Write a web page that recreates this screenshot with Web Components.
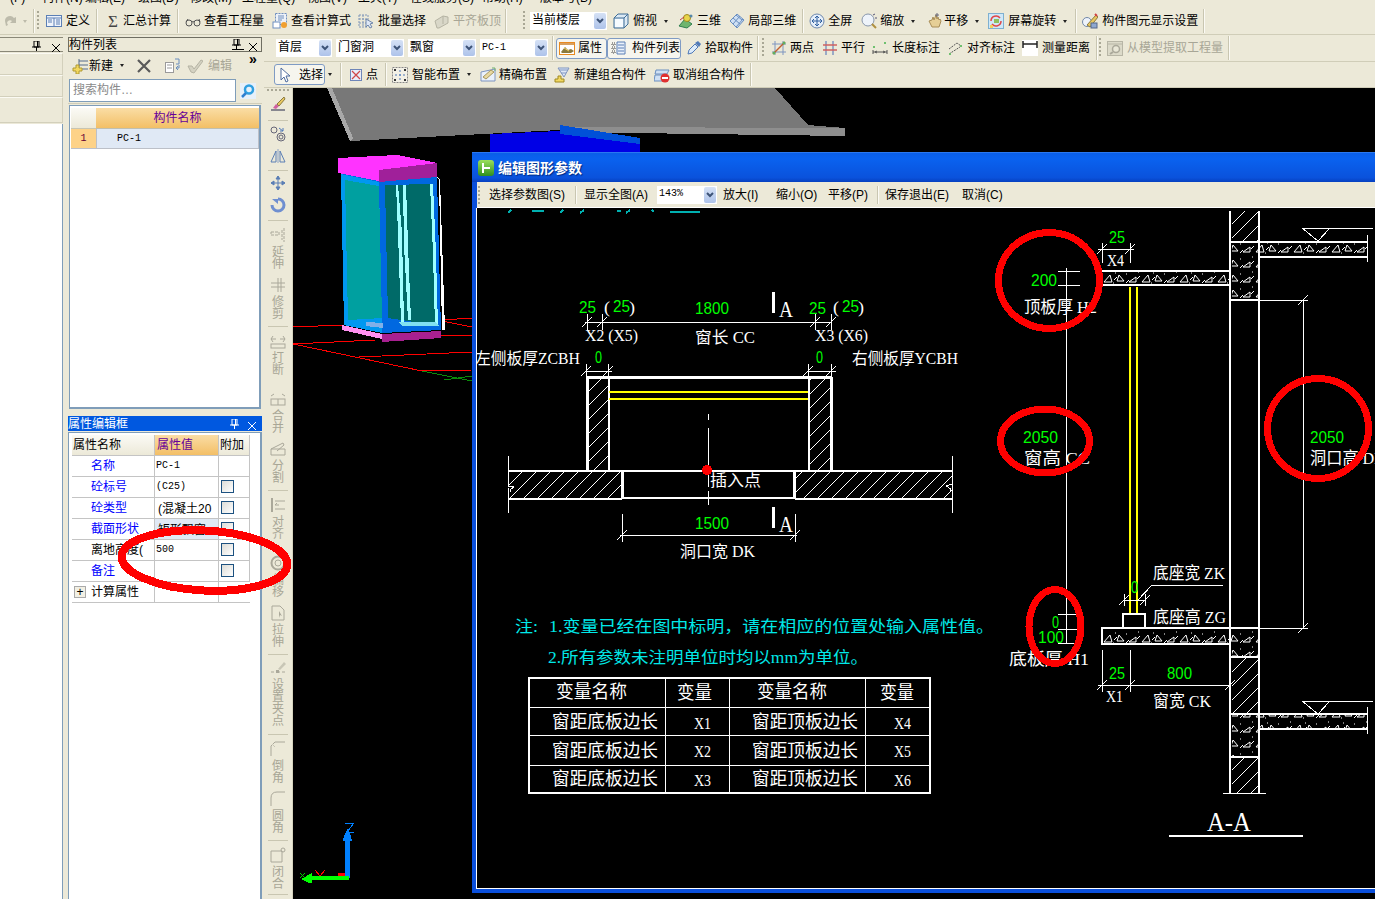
<!DOCTYPE html>
<html lang="zh">
<head>
<meta charset="utf-8">
<title>编辑图形参数</title>
<style>
  html, body { margin: 0; padding: 0; background: #ece9d8; }
  body {
    width: 1375px; height: 899px; overflow: hidden; position: relative;
    font: 12px/14px "Liberation Sans", "Noto Sans CJK SC", sans-serif; color: #000;
    display: flex; flex-direction: column;
  }
  .work { display: flex; flex: 1; min-height: 0; }
  .right { flex: 1; min-width: 0; display: flex; flex-direction: column; }
  .stage { flex: 1; min-height: 0; display: flex; }
</style>
</head>
<body>
<menu-bar></menu-bar>

<tool-bar h="27">
  <ui-icon name="undo" style="margin-left:2px"></ui-icon>
  <tool-caret off style="margin-left:5px"></tool-caret>
  <tool-sep style="margin-left:5px"></tool-sep>
  <tool-grip style="margin-left:3px"></tool-grip>
  <tool-item icon="define" style="margin-left:7px">定义</tool-item>
  <tool-sep style="margin-left:6px"></tool-sep>
  <tool-item icon="sigma" style="margin-left:9px;--g:1px">汇总计算</tool-item>
  <tool-sep style="margin-left:6px"></tool-sep>
  <tool-item icon="glasses" style="margin-left:7px;--g:3px">查看工程量</tool-item>
  <tool-item icon="calc" style="margin-left:8px;--g:3px">查看计算式</tool-item>
  <tool-item icon="batch" style="margin-left:7px">批量选择</tool-item>
  <tool-item icon="flush" off style="margin-left:8px;--g:3px">平齐板顶</tool-item>
  <tool-sep style="margin-left:4px"></tool-sep>
  <tool-grip style="margin-left:17px"></tool-grip>
  <combo-box style="margin-left:5px;width:77px">当前楼层</combo-box>
  <tool-item icon="cube" caret style="margin-left:6px">俯视</tool-item>
  <tool-item icon="view3d" style="margin-left:9px;--g:3px">三维</tool-item>
  <tool-item icon="local3d" style="margin-left:8px;--g:3px">局部三维</tool-item>
  <tool-sep style="margin-left:6px"></tool-sep>
  <tool-item icon="full" style="margin-left:6px;--g:3px">全屏</tool-item>
  <tool-item icon="zoom" caret style="margin-left:9px;--g:3px">缩放</tool-item>
  <tool-item icon="hand" caret style="margin-left:10px;--g:2px">平移</tool-item>
  <tool-item icon="spin" caret style="margin-left:8px">屏幕旋转</tool-item>
  <tool-sep style="margin-left:7px"></tool-sep>
  <tool-item icon="display" style="margin-left:6px">构件图元显示设置</tool-item>
  <tool-sep style="margin-left:5px"></tool-sep>
</tool-bar>

<div class="work">
  <dock-narrow></dock-narrow>
  <dock-column>
    <dock-header active>构件列表</dock-header>
    <tool-bar h="27" plain>
      <tool-item icon="newitem" caret style="margin-left:4px;--g:1px">新建</tool-item>
      <ui-icon name="remove" style="margin-left:11px"></ui-icon>
      <ui-icon name="copy" style="margin-left:12px"></ui-icon>
      <tool-item icon="check" off style="margin-left:7px;--g:5px">编辑</tool-item>
      <span style="margin-left:17px;font-size:14px;line-height:10px;font-weight:bold;align-self:flex-start;margin-top:2px">»</span>
    </tool-bar>
    <search-row></search-row>
    <part-list></part-list>
    <dock-header blue>属性编辑框</dock-header>
    <prop-grid></prop-grid>
  </dock-column>
  <div class="right">
    <tool-bar h="27">
      <combo-box style="margin-left:12px;width:56px">首层</combo-box>
      <combo-box style="margin-left:4px;width:68px">门窗洞</combo-box>
      <combo-box style="margin-left:4px;width:68px">飘窗</combo-box>
      <combo-box style="margin-left:4px;width:68px" mono>PC-1</combo-box>
      <tool-sep style="margin-left:4px"></tool-sep>
      <tool-item icon="attr" boxed style="margin-left:3px;width:51px;--g:3px">属性</tool-item>
      <tool-item icon="list" boxed style="width:74px;--g:6px">构件列表</tool-item>
      <tool-item icon="picker" style="margin-left:5px;--g:3px">拾取构件</tool-item>
      <tool-sep style="margin-left:4px"></tool-sep>
      <tool-grip style="margin-left:4px"></tool-grip>
      <tool-item icon="twopoint" style="margin-left:7px;--g:3px">两点</tool-item>
      <tool-item icon="parallel" style="margin-left:8px;--g:3px">平行</tool-item>
      <tool-item icon="lendim" style="margin-left:7px">长度标注</tool-item>
      <tool-item icon="aligndim" style="margin-left:7px">对齐标注</tool-item>
      <tool-item icon="measure" style="margin-left:7px">测量距离</tool-item>
      <tool-sep style="margin-left:6px"></tool-sep>
      <tool-grip style="margin-left:2px"></tool-grip>
      <tool-item icon="extract" off style="margin-left:6px">从模型提取工程量</tool-item>
      <tool-sep style="margin-left:5px"></tool-sep>
    </tool-bar>
    <tool-bar h="26">
      <tool-item icon="pointer" boxed style="margin-left:10px;width:51px;--g:6px">选择</tool-item>
      <tool-caret style="margin-left:3px"></tool-caret>
      <tool-sep style="margin-left:7px"></tool-sep>
      <tool-item icon="point" style="margin-left:7px;--g:2px">点</tool-item>
      <tool-sep style="margin-left:7px"></tool-sep>
      <tool-item icon="smart" caret style="margin-left:6px">智能布置</tool-item>
      <tool-item icon="precise" style="margin-left:8px;--g:3px">精确布置</tool-item>
      <tool-item icon="group" style="margin-left:7px">新建组合构件</tool-item>
      <tool-item icon="ungroup" style="margin-left:8px;--g:3px">取消组合构件</tool-item>
      <tool-sep style="margin-left:5px"></tool-sep>
    </tool-bar>
    <div class="stage">
      <side-bar></side-bar>
      <cad-view>
        <param-dialog>
          <cad-sheet></cad-sheet>
        </param-dialog>
      </cad-view>
    </div>
  </div>
</div>
<red-marks></red-marks>

<script>
const ICONS = {
  undo: '<path d="M3 8a5 5 0 0 1 9-3l2-1v6H8l2-2a3 3 0 0 0-5 2l1 2-2 1z" fill="#bdbbab"/>',
  define: '<rect x=".5" y="2.5" width="15" height="11" fill="#eef3fb" stroke="#5b7fb5"/><path d="M1 5h14M8 5v8M10 7h4M10 9h4M10 11h4M2 7h4M2 9h4" stroke="#5b7fb5"/>',
  sigma: '<text x="2" y="14" font-family="Liberation Serif" font-size="17" fill="#444">Σ</text>',
  glasses: '<circle cx="4" cy="10" r="3" fill="none" stroke="#555"/><circle cx="12" cy="10" r="3" fill="none" stroke="#555"/><path d="M7 9q1-1 2 0M1 9l2-3M15 9l-1-3" stroke="#555" fill="none"/>',
  calc: '<rect x="3.5" y=".5" width="11" height="11" fill="#eef2f8" stroke="#6f8fbf" stroke-dasharray="2 1"/><path d="M6 3h6M6 5h6M6 7h4" stroke="#6f8fbf"/><rect x="1" y="9" width="7" height="6" fill="#fff" stroke="#6f8fbf"/><circle cx="12" cy="12" r="3" fill="#f0a030"/>',
  batch: '<path d="M1 2h9M1 6h9M1 10h9M1 14h9M1 2v12M5 2v12M10 2v12" stroke="#7f95b8" stroke-dasharray="2 1"/><path d="M8 6l7 4-3 1 2 3-2 1-2-3-2 2z" fill="#dfe8f6" stroke="#6f86aa"/>',
  flush: '<path d="M1 8l8-5 5 1v6l-9 5H3z" fill="#d9d7c8" stroke="#b5b3a3"/><path d="M9 3v8" stroke="#b5b3a3"/>',
  cube: '<path d="M1 5l4-4h10v10l-4 4H1z" fill="#dbe9f4" stroke="#3f6d96"/><path d="M1 5h10v10M11 5l4-4" fill="none" stroke="#3f6d96"/><path d="M2 6h8v8H2z" fill="#f6fbff"/>',
  view3d: '<path d="M1 13l6-7 7 5-5 4z" fill="#6fb56f" stroke="#2f7f4f"/><circle cx="9" cy="5" r="3.5" fill="#e8d44a" stroke="#a08a20"/><path d="M2 7l4-3" stroke="#c04040"/><circle cx="13" cy="3" r="1.500" fill="#58a"/>',
  local3d: '<path d="M1 8l7-7 7 6-7 8z" fill="#cfe0f4" stroke="#6a8fc0"/><path d="M4 5l7 6M7 2l6 5M11 3l-7 8M14 6l-7 8" stroke="#6a8fc0"/>',
  full: '<circle cx="8" cy="8" r="7" fill="#e6effa" stroke="#6e88ad"/><path d="M8 3v10M3 8h10M8 3l-2 2M8 3l2 2M8 13l-2-2M8 13l2-2M3 8l2-2M3 8l2 2M13 8l-2-2M13 8l-2 2" stroke="#2f5f9f" fill="none"/>',
  zoom: '<circle cx="7" cy="7" r="6" fill="#eef3fa" stroke="#8896ac"/><path d="M11 11l4 4" stroke="#b09040" stroke-width="2"/><path d="M12 2l2-1M14 5h2" stroke="#557"/>',
  hand: '<path d="M3 8l3 6h7l2-6-1-2-1 1-1-3-1 2-1-4-2 5-1-3-1 3z" fill="#e6cf96" stroke="#a98e58"/><path d="M11 0v4M9 2h4" stroke="#667"/>',
  spin: '<rect x=".5" y=".5" width="15" height="15" fill="#cfe8f8" stroke="#7fb0d0"/><path d="M3 8a5 5 0 0 1 9-3" fill="none" stroke="#e04848" stroke-width="1.500"/><path d="M13 8a5 5 0 0 1-9 3" fill="none" stroke="#e04848" stroke-width="1.500"/><rect x="6" y="6" width="5" height="4" fill="#8fc060"/><path d="M2 12h3v3H2z" fill="#f2d060"/>',
  display: '<circle cx="5" cy="9" r="4.500" fill="#eef3fb" stroke="#7288a8"/><path d="M5 12l9-10 2 2-8 10z" fill="#e9c860" stroke="#8a7a40"/><rect x="9" y="10" width="6" height="5" fill="#8fa8d0" stroke="#55688a"/><path d="M13 1l2 2" stroke="#d04040" stroke-width="2"/>',
  attr: '<rect x=".5" y="2.500" width="15" height="12" fill="#fff" stroke="#e88a20"/><path d="M1 3h14v2H1z" fill="#d8a060"/><path d="M2 12l4-5 3 3 3-1 3 2-3 2H3z" fill="#8a7a40"/><path d="M5 8l5 3" stroke="#f0d060"/>',
  list: '<path d="M7 2h8v12H7z" fill="#eaf1fb" stroke="#5b7fb5"/><path d="M8 5h6M8 8h6M8 11h6" stroke="#5b7fb5"/><path d="M2 3h3v2H2zM2 7h3v2H2zM2 11h3v2H2z" fill="none" stroke="#444" stroke-dasharray="1 1"/>',
  picker: '<path d="M2 14l1-4 6-6 3 3-6 6z" fill="#dcebfa" stroke="#4f79b8"/><path d="M9 3l3-2 3 3-2 3z" fill="#4f79b8"/>',
  twopoint: '<path d="M4 1v14M12 1v14M1 4h14M1 12h14" stroke="#7f95c0"/><path d="M2 14L14 2" stroke="#c06030" stroke-width="1.500"/><circle cx="3" cy="13" r="1.500" fill="#60b060"/><circle cx="13" cy="3" r="1.500" fill="#60b060"/>',
  parallel: '<path d="M4 1v14M11 1v14" stroke="#7f95c0" stroke-width="1.500"/><path d="M1 5h14M1 10h14" stroke="#d06060" stroke-width="1.500"/>',
  lendim: '<rect x="1" y="6" width="2" height="2" fill="#6fc06f"/><rect x="12" y="2" width="2" height="2" fill="#6fc06f"/><path d="M1 10v4M15 10v4M1 12h14M5 11l-2 1 2 1M11 11l2 1-2 1" stroke="#555" fill="none"/>',
  aligndim: '<path d="M2 14l11-7" stroke="#555" stroke-dasharray="2 1"/><path d="M2 9l8-6 4 3" stroke="#555" fill="none" stroke-dasharray="2 1"/><rect x="2" y="13" width="2" height="2" fill="#6fc06f"/><rect x="13" y="5" width="2" height="2" fill="#6fc06f"/>',
  measure: '<rect width="16" height="16" fill="#fff"/><path d="M1 1v7M15 1v7M1 4h14" stroke="#222" stroke-width="1.500"/>',
  extract: '<rect x=".5" y="1.500" width="15" height="14" fill="#dcdac9" stroke="#b8b6a6"/><path d="M1 4h14" stroke="#b8b6a6"/><circle cx="9" cy="9" r="3.500" fill="#e9e7d7" stroke="#aaa89a" stroke-width="1.500"/><path d="M6 12l-3 2" stroke="#aaa89a" stroke-width="2"/>',
  pointer: '<path d="M4 1v12l3-3 2 5 2-1-2-5h4z" fill="#fff" stroke="#4f6c9f"/>',
  point: '<rect x="2.500" y="2.500" width="11" height="11" fill="#e8eefa" stroke="#6f86b8"/><path d="M4 4l8 8M12 4l-8 8" stroke="#d04848" stroke-width="1.200"/>',
  smart: '<rect x=".5" y=".5" width="15" height="15" fill="#f2f0e6" stroke="#888" stroke-dasharray="2 1"/><path d="M8 3v10M3 8h10" stroke="#4f79b8" stroke-dasharray="2 2"/><rect x="2" y="2" width="2" height="2" fill="#333"/><rect x="12" y="12" width="2" height="2" fill="#333"/><rect x="12" y="2" width="2" height="2" fill="#333"/><rect x="2" y="12" width="2" height="2" fill="#333"/>',
  precise: '<path d="M1 5l14-3v12H1z" fill="#eaf1fb" stroke="#7f95c0"/><path d="M3 10l8-7 3 2-8 7z" fill="#e8d8a0" stroke="#a89860"/><path d="M12 1h3v3" stroke="#70b070" fill="none"/>',
  group: '<path d="M4 1h11l-5 9z" fill="#dfe8f6" stroke="#7f95c0"/><path d="M5 3h9M7 6h5" stroke="#7f95c0"/><path d="M1 12h3V9h3v3h3v3H1z" fill="#f2d860" stroke="#a08a20"/>',
  ungroup: '<path d="M2 3h13l-2 4H1zM1 8h9v6H0z" fill="#cfe0f4" stroke="#6a8fc0"/><circle cx="11" cy="11" r="4.500" fill="#e03030"/><rect x="8" y="10" width="6" height="2" fill="#fff"/>',
  newitem: '<path d="M7 3h9M7 7h9M7 11h9M7 1v11" stroke="#556a8c"/><path d="M1 10h3V7h3v3h3v3H7v3H4v-3H1z" fill="#f2d860" stroke="#b09a30"/>',
  remove: '<path d="M2 2l12 12M14 2L2 14" stroke="#5a5a5a" stroke-width="2.200"/>',
  copy: '<rect x="1.500" y="4.500" width="8" height="10" fill="#fff" stroke="#9a9a9a"/><path d="M3 7h5M3 10h5" stroke="#9a9a9a"/><path d="M11 1h4v5h-3M12 10h3V7M14 12l-2-2 2-2" stroke="#6a8fc0" fill="none"/>',
  check: '<path d="M1 8h4l2 3 7-9 2 1-9 12-3-1z" fill="#d4d2c2" stroke="#b5b3a3"/>',
  brush: '<path d="M1 14h14" stroke="#667" stroke-width="1.500"/><path d="M3 12l3-4 3 2-3 3z" fill="#d060a0"/><path d="M7 8l7-7 1 2-6 7z" fill="#e9c860" stroke="#8a7a40"/>',
  shapes: '<circle cx="4" cy="4" r="3" fill="none" stroke="#667"/><circle cx="11" cy="11" r="4" fill="none" stroke="#667"/><circle cx="11" cy="11" r="2" fill="none" stroke="#667"/><path d="M9 2l4 3m0-3v3h-3" stroke="#4f79b8" fill="none"/>',
  mirror: '<path d="M8 1v14" stroke="#8ea4c8"/><path d="M6 3v11H1zM10 3v11h5z" fill="none" stroke="#5b7fb5"/>',
  move: '<path d="M8 1v14M1 8h14M8 1L6 4h4zM8 15l-2-3h4zM1 8l3-2v4zM15 8l-3-2v4z" stroke="#5b7fb5" fill="#5b7fb5"/>',
  rotate: '<path d="M8 2a6 6 0 1 1-6 6" fill="none" stroke="#6f8fd0" stroke-width="3"/><path d="M2 2l6 0v5z" fill="#6f8fd0"/>',
  extend: '<path d="M1 5h8v3H1zM14 1v14M12 3v10" stroke="#aaa89a" fill="none" stroke-dasharray="3 1"/>',
  trim: '<path d="M1 6h14M1 10h14M8 1v14M11 1v14" stroke="#aaa89a"/>',
  break: '<path d="M1 6h5M10 6h5M3 3L1 6l2 3M13 3l2 3-2 3" stroke="#aaa89a" fill="none"/><rect x="1" y="11" width="14" height="4" fill="none" stroke="#aaa89a"/>',
  merge: '<path d="M1 5l3-2M15 5l-3-2" stroke="#aaa89a"/><rect x="1" y="8" width="14" height="6" fill="none" stroke="#aaa89a"/><path d="M8 8v6" stroke="#aaa89a"/>',
  split: '<path d="M1 8h14v6H1zM1 8l12-6 1 2-7 6" stroke="#aaa89a" fill="none"/>',
  alignv: '<path d="M2 1v14" stroke="#aaa89a" stroke-width="2"/><path d="M5 4h10M5 12h10M9 8H5l2-2" stroke="#aaa89a" fill="none"/>',
  offset: '<circle cx="8" cy="8" r="6.500" fill="none" stroke="#aaa89a" stroke-width="2"/><circle cx="8" cy="8" r="3" fill="none" stroke="#aaa89a"/>',
  stretch: '<path d="M2 1h8l4 4v10H2z" fill="none" stroke="#aaa89a"/><path d="M9 6l3 5-2-1-1 3z" fill="#aaa89a"/>',
  gripset: '<path d="M1 12h3M6 12h4M12 12h3" stroke="#aaa89a"/><rect x="6" y="10" width="3" height="3" fill="#aaa89a"/><path d="M8 9l6-7 2 2-6 6z" fill="#c8c6b6"/>',
  chamfer: '<path d="M1 15V5l4-4h10" fill="none" stroke="#aaa89a"/><path d="M2 3l3 3" stroke="#c8c6b6"/>',
  fillet: '<path d="M1 15V7q0-6 6-6h8" fill="none" stroke="#aaa89a"/>',
  close: '<path d="M1 4h11v11H1z" fill="none" stroke="#aaa89a"/><circle cx="13" cy="3" r="2" fill="none" stroke="#aaa89a"/>'
};

class UiIcon extends HTMLElement {
  connectedCallback() {
    const root = this.shadowRoot || this.attachShadow({ mode: 'open' });
    root.innerHTML = `<style>:host{display:block;width:16px;height:16px;flex:none}svg{display:block}</style>
      <svg width="16" height="16" viewBox="0 0 16 16">${ICONS[this.getAttribute('name')] || ''}</svg>`;
  }
}

class ToolCaret extends HTMLElement {
  constructor() {
    super();
    this.attachShadow({ mode: 'open' }).innerHTML = `<style>:host{display:block;flex:none;width:5px;height:3px}
      div{width:0;height:0;border:solid transparent;border-width:3px 2.500px 0;border-top-color:#222}
      :host([off]) div{border-top-color:#bdbbab}</style><div></div>`;
  }
}

class ToolItem extends HTMLElement {
  connectedCallback() {
    const root = this.shadowRoot || this.attachShadow({ mode: 'open' });
    const icon = this.getAttribute('icon');
    root.innerHTML = `<style>
      :host{display:flex;align-items:center;gap:var(--g,4px);height:18px;white-space:nowrap;flex:none;box-sizing:border-box}
      :host([off]){color:#a8a696}
      :host([boxed]){height:21px;border:1px solid #7f9bc4;border-radius:3px;background:#f6f5ee;padding-left:2px}
      tool-caret{margin-left:calc(7px - var(--g,4px))}
    </style>${icon ? `<ui-icon name="${icon}"></ui-icon>` : ''}<slot></slot>${this.hasAttribute('caret') ? '<tool-caret></tool-caret>' : ''}`;
  }
}

class ToolSep extends HTMLElement {
  constructor() {
    super();
    this.attachShadow({ mode: 'open' }).innerHTML = `<style>:host{display:block;flex:none;width:1px;align-self:stretch;margin:1px 0;background:#c9c6b1;box-shadow:1px 0 0 #fbfaf4}</style>`;
  }
}

class ToolGrip extends HTMLElement {
  constructor() {
    super();
    this.attachShadow({ mode: 'open' }).innerHTML = `<style>:host{display:block;flex:none;width:2px;align-self:stretch;margin:3px 0;
      background:repeating-linear-gradient(#a9a795 0 2px,transparent 2px 4px)}</style>`;
  }
}

class ToolBar extends HTMLElement {
  connectedCallback() {
    const root = this.shadowRoot || this.attachShadow({ mode: 'open' });
    const h = this.getAttribute('h') || 26;
    root.innerHTML = `<style>
      :host{display:flex;align-items:center;height:${h}px;box-sizing:border-box;flex:none;background:#ece9d8;border-bottom:1px solid #d0cdb8}
      :host([plain]){border:0}
    </style><slot></slot>`;
  }
}

class MenuBar extends HTMLElement {
  constructor() {
    super();
    const items = [['(F)', 10, 42], ['构件(N)', 42, 85], ['编辑(E)', 85, 138], ['绘图(D)', 138, 190], ['修改(M)', 190, 242], ['工程量(Q)', 242, 307],
      ['视图(V)', 307, 358], ['工具(T)', 358, 410], ['在线服务(S)', 410, 482], ['帮助(H)', 482, 540], ['版本号(B)', 540, 620]];
    this.attachShadow({ mode: 'open' }).innerHTML = `<style>
      :host{display:block;height:8px;overflow:hidden;flex:none;border-bottom:1px solid #cfccb7;box-sizing:content-box;margin-bottom:-1px}
      div{display:flex;margin-top:-9px;padding-left:10px}
      span{flex:none;white-space:nowrap}
    </style><div>${items.map(([t, a, b]) => `<span style="width:${b - a}px">${t}</span>`).join('')}</div>`;
  }
}

class ComboBox extends HTMLElement {
  constructor() {
    super();
    this.attachShadow({ mode: 'open' }).innerHTML = `<style>
      :host{display:flex;flex:none;height:18px;background:#fff;align-items:center;padding-left:2px;box-sizing:border-box;position:relative}
      :host([mono]){font:10px "Liberation Mono",monospace}
      .t{flex:1;white-space:nowrap;overflow:hidden;margin-top:-2px}
      .b{width:12px;height:16px;margin-right:1px;background:linear-gradient(#d5e1f5,#aec3ea);border-radius:2px;display:flex;align-items:center;justify-content:center}
    </style><span class="t"><slot></slot></span>
    <span class="b"><svg width="8" height="6"><path d="M1 1l3 3 3-3" fill="none" stroke="#3d5377" stroke-width="2"/></svg></span>`;
  }
}

class DockNarrow extends HTMLElement {
  constructor() {
    super();
    this.attachShadow({ mode: 'open' }).innerHTML = `<style>
      :host{display:flex;flex-direction:column;flex:none;width:63px;height:100%;padding-top:2px;box-sizing:border-box}
      .head{height:15px;border-top:1px solid #8a8878;border-bottom:1px solid #8a8878;box-sizing:border-box;display:flex;justify-content:flex-end;align-items:center;gap:11px;padding-right:3px;flex:none}
      .tab{flex:none;box-sizing:border-box;border:1px solid #d3d0bc;border-left:0;border-top-color:#fbfaf3;margin-right:0;background:#ece9d8}
      .white{flex:1;background:#fff;border-right:1px solid #7f9db9;margin-top:1px}
    </style>
    <div class="head"><dock-pin></dock-pin><dock-x></dock-x></div>
    <div class="tab" style="height:22px;margin-top:1px"></div>
    <div class="tab" style="height:22px"></div>
    <div class="tab" style="height:26px"></div>
    <div class="white"></div>`;
  }
}

class DockPin extends HTMLElement {
  constructor() {
    super();
    this.attachShadow({ mode: 'open' }).innerHTML = `<style>:host{display:block;width:9px;height:10px;flex:none}</style>
      <svg width="9" height="10"><path d="M2 0h5v6H2zM0 6h9M4.500 6v4M5.500 0v6" fill="none" stroke="currentColor"/></svg>`;
  }
}
class DockX extends HTMLElement {
  constructor() {
    super();
    this.attachShadow({ mode: 'open' }).innerHTML = `<style>:host{display:block;width:8px;height:8px;flex:none}</style>
      <svg width="8" height="8"><path d="M0 0l8 8M8 0L0 8" stroke="currentColor"/></svg>`;
  }
}

class DockColumn extends HTMLElement {
  constructor() {
    super();
    this.attachShadow({ mode: 'open' }).innerHTML = `<style>
      :host{display:flex;flex-direction:column;flex:none;width:201px;height:100%;padding:2px 2px 0 5px;box-sizing:border-box}
    </style><slot></slot>`;
  }
}

class DockHeader extends HTMLElement {
  constructor() {
    super();
    this.attachShadow({ mode: 'open' }).innerHTML = `<style>
      :host{display:flex;align-items:center;flex:none;height:15px;box-sizing:border-box;font-size:12px;line-height:13px;color:#000;overflow:hidden}
      :host([active]){border:1px solid #6f6e62;padding-top:1px}
      :host([blue]){background:#0058e0;color:#fff;margin-top:7px;width:194px;padding-top:1px}
      .t{flex:1}
      .b{display:flex;align-items:center;gap:9px;padding-right:6px}
      :host([active]) .b{gap:5px;padding-right:4px}
      :host([active]) dock-pin{border-bottom:1px solid #000;padding:0 3px 0 0;margin-top:-2px}
    </style><span class="t"><slot></slot></span><span class="b"><dock-pin></dock-pin><dock-x></dock-x></span>`;
  }
}

class SearchRow extends HTMLElement {
  constructor() {
    super();
    this.attachShadow({ mode: 'open' }).innerHTML = `<style>
      :host{display:flex;flex:none;height:25px;box-sizing:border-box;border-bottom:1px solid #d0cdb8}
      .in{width:167px;height:23px;margin-left:1px;box-sizing:border-box;background:#fff;border:1px solid #7f9db9;color:#8a8a8a;padding:3px 3px;line-height:14px;white-space:nowrap}
      .go{width:24px;display:flex;align-items:center;justify-content:center}
    </style><div class="in">搜索构件…</div>
    <div class="go"><svg width="16" height="16"><rect width="16" height="16" fill="#e6f0fa"/><circle cx="9" cy="6.500" r="4" fill="none" stroke="#2f9fe0" stroke-width="2.500"/><path d="M6 10l-4 4" stroke="#2f7fd0" stroke-width="2.500"/></svg></div>`;
  }
}

class PartList extends HTMLElement {
  constructor() {
    super();
    this.attachShadow({ mode: 'open' }).innerHTML = `<style>
      :host{display:block;flex:none;height:304px;margin:1px 0 0 1px;width:192px;box-sizing:border-box;border:1px solid #7f9db9;border-width:1px 2px 2px 1px;background:#fff;padding:2px 1px 0 1px}
      .g{display:grid;grid-template-columns:25px 163px;grid-template-rows:21px 20px}
      .g>div{box-sizing:border-box;display:flex;align-items:center}
      .c0{background:linear-gradient(#fbfaf5,#ece9d8);border-bottom:1px solid #c8c5b2}
      .h{background:linear-gradient(#fadda5,#f3bf66);color:#660099;justify-content:center;border-bottom:1px solid #c0bfb0}
      .n{background:#fdd288;color:#660033;justify-content:center;font:10px "Liberation Mono",monospace;border-bottom:1px solid #bcc0c8}
      .v{background:#e0e9f5;padding-left:20px;font:10px "Liberation Mono",monospace;border:1px solid #bcc0c8;border-top:0}
    </style><div class="g"><div class="c0"></div><div class="h">构件名称</div><div class="n">1</div><div class="v">PC-1</div></div>`;
  }
}

class PropGrid extends HTMLElement {
  constructor() {
    super();
    const box = '<i></i>';
    const rows = [
      ['名称', 'PC-1', '', 0],
      ['砼标号', ' (C25)', box, 0],
      ['砼类型', '(混凝土20', box, 0],
      ['截面形状', '矩形飘窗', box, 1],
      ['离地高度(', '500', box, 2],
      ['备注', '', box, 0]
    ];
    this.attachShadow({ mode: 'open' }).innerHTML = `<style>
      :host{display:block;flex:1;min-height:0;margin:1px 0 0 0;width:194px;box-sizing:border-box;border:1px solid #7f9db9;border-bottom:0;border-width:1px 2px 0 1px;background:#fff;padding:2px 0 0 3px}
      .g{display:grid;grid-template-columns:83px 64px 31px;grid-auto-rows:21px;border-left:0}
      .g>div{box-sizing:border-box;display:flex;align-items:center;border-right:1px solid #c4c4c4;border-bottom:1px solid #c4c4c4;white-space:nowrap;overflow:hidden;padding-bottom:1px}
      .hd{background:linear-gradient(#fbfaf5,#ece9d8);padding-left:1px}
      .hv{background:linear-gradient(#fadda5,#f3bf66);color:#660099;padding-left:2px}
      .nm{padding-left:19px;color:#0000ff}
      .nm.k{color:#000}
      .val{padding-left:1px;font:10px "Liberation Mono",monospace;white-space:pre}
      .val.cjk{font:12px "Liberation Sans","Noto Sans CJK SC",sans-serif;padding-left:3px}
      .val.sel{background:#e0e9f5}
      .ck{padding-left:2px}
      i{display:block;width:13px;height:13px;box-sizing:border-box;border:1px solid #1c5180;background:linear-gradient(135deg,#dcdcd7,#fff)}
      .plus{gap:5px;padding-left:2px}
      b{display:flex;width:12px;height:12px;box-sizing:border-box;border:1px solid #aaa;background:#f2f0e4;font:normal 12px/10px "Liberation Sans";justify-content:center}
    </style><div class="g">
      <div class="hd">属性名称</div><div class="hv">属性值</div><div class="hd">附加</div>
      ${rows.map(([n, v, c, f]) => `<div class="nm ${f === 2 ? 'k' : ''}">${n}</div><div class="val ${/[一-龥]/.test(v) ? 'cjk' : ''} ${f === 1 ? 'sel' : ''}">${v}</div><div class="ck">${c}</div>`).join('')}
      <div class="plus"><b>+</b>计算属性</div><div></div><div style="border-right:0;border-bottom:1px solid #c4c4c4"></div>
    </div>`;
  }
}

class SideTool extends HTMLElement {
  connectedCallback() {
    const root = this.shadowRoot || this.attachShadow({ mode: 'open' });
    const chars = [...(this.getAttribute('label') || '')];
    root.innerHTML = `<style>
      :host{display:flex;flex-direction:column;align-items:center;flex:none;color:#a8a696}
      .v{display:flex;flex-direction:column;margin-top:3px;font-size:12px;line-height:12px;width:12px;text-align:center}
    </style><ui-icon name="${this.getAttribute('icon')}"></ui-icon>
    ${chars.length ? `<div class="v">${chars.map(c => `<span>${c}</span>`).join('')}</div>` : ''}`;
  }
}

class SideBar extends HTMLElement {
  constructor() {
    super();
    const items = [
      ['brush', '', 5], ['|', '', 8], ['shapes', '', 5], ['mirror', '', 6], ['|', '', 6], ['move', '', 4], ['rotate', '', 6], ['|', '', 7],
      ['extend', '延伸', 6], ['trim', '修剪', 7], ['|', '', 6], ['break', '打断', 6], ['merge', '合并', 15], ['split', '分割', 7], ['|', '', 6],
      ['alignv', '对齐', 6], ['offset', '偏移', 15], ['stretch', '拉伸', 7], ['|', '', 6], ['gripset', '设置夹点', 5], ['|', '', 7],
      ['chamfer', '倒角', 6], ['fillet', '圆角', 7], ['|', '', 6], ['close', '闭合', 6], ['|', '', 4]
    ];
    this.attachShadow({ mode: 'open' }).innerHTML = `<style>
      :host{display:flex;flex-direction:column;align-items:center;flex:none;width:29px;height:100%;box-sizing:border-box;background:#ece9d8;border-right:1px solid #d6d3be;overflow:hidden}
      .grip{width:22px;height:2px;margin-top:1px;flex:none;background:repeating-linear-gradient(90deg,#a9a795 0 2px,transparent 2px 4px)}
      .sep{width:20px;height:1px;background:#c9c6b1;flex:none}
    </style><div class="grip"></div>${items.map(([ic, lb, m]) => ic === '|'
      ? `<div class="sep" style="margin-top:${m}px"></div>`
      : `<side-tool icon="${ic}" label="${lb}" style="margin-top:${m}px"></side-tool>`).join('')}`;
  }
}

// the 3D model behind the dialog, coordinates are page pixels
class CadView extends HTMLElement {
  constructor() {
    super();
    const red = [[293, 327, 344, 325], [442, 320, 472, 318], [442, 321, 472, 327], [441, 336, 472, 335], [293, 344, 375, 340], [293, 344, 422, 371], [359, 357, 472, 352], [422, 371, 472, 370]];
    this.attachShadow({ mode: 'open' }).innerHTML = `<style>
      :host{display:block;position:relative;flex:1;min-width:0;background:#000;overflow:hidden}
      svg{display:block;position:absolute;inset:0}
      ::slotted(param-dialog){position:absolute;left:179px;top:64px;right:0;bottom:6px}
    </style>
    <svg width="1082" height="811" viewBox="293 88 1082 811" shape-rendering="crispEdges">
      <path d="M327 88h448l33 37 37 3v8l-285-6-210 11z" fill="#787878"/>
      <path d="M327 88h5l21 50-3 3z" fill="#a8a8a8"/>
      <path d="M560 127l285 1v8l-285-4z" fill="#8e8e8e"/>
      <path d="M490 134l70-3v-6l80 13v14H490z" fill="#0000e6"/>
      <path d="M560 125l80 13v6l-80-10z" fill="#0050d8"/>
      ${red.map(([a, b, c, d]) => `<path d="M${a} ${b}L${c} ${d}" stroke="#f00" fill="none"/>`).join('')}
      <path d="M422 371l50 10M444 380l28-4" stroke="#0a8a0a" fill="none"/>
      <path d="M341 174l96 3 4 153-59 3-38-8z" fill="#0068e0"/>
      <path d="M341 174l38 8 3 151-38-8z" fill="#0098f0"/>
      <path d="M345 180l34 6 3 132-34 2z" fill="#00a0a0"/>
      <path d="M385 185l47-1 3 141-47-7z" fill="#006a68"/>
      <path d="M396 185h2l4 48 2 90h-3l-3-90zM403 185h3l2 60 3 75h-3l-4-75zM430 184h3l3 70 2 72h-3l-2-72z" fill="#a0ffff"/>
      <path d="M398 322h37l5 4h-38z" fill="#80e0f0"/>
      <path d="M366 322l17 1v5l-17-2z" fill="#80b0e8"/>
      <path d="M437 177l3 3 5 150h-3l-3-150z" fill="#fff"/>
      <path d="M338 158l59-3 40 8v13l-58 5-41-8z" fill="#ff33ff"/>
      <path d="M379 170l58-7v14l-58 5z" fill="#a0209a"/>
      <path d="M342 325l40 9v5l-40-9z" fill="#ff90f0"/>
      <path d="M382 334l59-3v7l-59 4z" fill="#a82090"/>
      <path d="M348 828l3 8 1 5h-9l1-5z" fill="#0080ff"/>
      <rect x="345" y="840" width="5" height="38" fill="#0080ff"/>
      <path d="M301 879l11-6v3h37v4h-37v3h-3z" fill="#00ff00"/>
      <path d="M338 873h7v3h-7z" fill="#f00"/>
      <path d="M345 823h9l-7 9h7" stroke="#0080ff" fill="none"/>
      <path d="M315 870l5 6 5-6" stroke="#f00" fill="none"/>
      <path d="M300 873l5 5M305 873l-5 5" stroke="#0c0" fill="none"/>
    </svg><slot></slot>`;
  }
}

class ParamDialog extends HTMLElement {
  constructor() {
    super();
    this.attachShadow({ mode: 'open' }).innerHTML = `<style>
      :host{display:flex;flex-direction:column;box-sizing:border-box;background:#0a4fdc;padding:0 0 4px 4px;border-top:1px solid #2a78f0;overflow:hidden}
      .title{height:29px;flex:none;margin-left:-4px;padding-left:6px;display:flex;align-items:center;gap:4px;color:#fff;font-weight:bold;font-size:14px;
        background:linear-gradient(#0a5fe8,#0a62ef 20%,#0a52dc 85%,#0640c0);text-shadow:1px 1px 1px #002a80;white-space:nowrap}
      .logo{width:16px;height:16px;border-radius:3px;background:linear-gradient(#9ae05a,#2f8f1f);position:relative;flex:none}
      .logo:before{content:"";position:absolute;left:4px;top:3px;width:2px;height:10px;background:#fff}
      .logo:after{content:"";position:absolute;left:4px;top:7px;width:8px;height:2px;background:#fff}
      .bar{height:25px;flex:none;background:#ece9d8;display:flex;align-items:center;border-bottom:1px solid #fff;margin-left:1px;box-sizing:content-box}
      .bar span{flex:none;white-space:nowrap}
      .sep{width:1px;height:18px;background:#c9c6b1;box-shadow:1px 0 0 #fbfaf4}
      .grip{width:2px;height:18px;background:repeating-linear-gradient(#a9a795 0 2px,transparent 2px 4px)}
      .sheet{flex:1;min-height:0;background:#000;margin-left:1px;border-bottom:1px solid #fff;border-left:0;box-shadow:-1px 0 0 #fff}
    </style>
    <div class="title"><span class="logo"></span>编辑图形参数</div>
    <div class="bar">
      <span class="grip" style="margin-left:1px"></span>
      <span style="margin-left:9px;width:86px">选择参数图(S)</span><span class="sep"></span>
      <span style="margin-left:8px;width:73px">显示全图(A)</span>
      <combo-box mono style="width:60px">143%</combo-box>
      <span style="margin-left:6px;width:53px">放大(I)</span>
      <span style="width:52px">缩小(O)</span>
      <span style="width:49px">平移(P)</span><span class="sep"></span>
      <span style="margin-left:7px;width:77px">保存退出(E)</span>
      <span>取消(C)</span>
    </div>
    <div class="sheet"><slot></slot></div>`;
  }
}

const CJK = '"Noto Sans CJK SC"';
const SERIF = `"Liberation Serif",${CJK},serif`;
const SANS = '"Liberation Sans",sans-serif';

function txt(x0, x1, y, s, opts = {}) {
  const { c = '#fff', f = SERIF, z = 16 } = opts;
  return `<text x="${x0}" y="${y}" textLength="${x1 - x0}" lengthAdjust="spacingAndGlyphs" fill="${c}" font-family='${f}' font-size="${z}">${s}</text>`;
}
const num = (x0, x1, y, s) => txt(x0, x1, y, s, { c: '#00ff00', f: SANS, z: 16 });
const ln = (x1, y1, x2, y2, w = 1, c = '#fff') => `<path d="M${x1} ${y1}L${x2} ${y2}" stroke="${c}" stroke-width="${w}"/>`;
const tick = (x, y) => ln(x - 5, y + 5, x + 5, y - 5);

function levelMark(y) {
  return ln(1302, y, 1373, y) + ln(1302, y, 1318, y + 13) + ln(1330, y, 1318, y + 13);
}

// the section and plan drawing, page coordinates so it reads against the screenshot
class CadSheet extends HTMLElement {
  constructor() {
    super();
    const rows = [[728, 729, 'X1', 'X4'], [757, 757, 'X2', 'X5'], [785, 786, 'X3', 'X6']];
    const art = [
      // remains of the clipped heading
      `<path d="M508 213l3-3M532 211h12M560 213l3-3M580 213l4-3M617 211h4M626 213l4-3M654 212l-2-2M670 212h30" stroke="#00b0b0" stroke-width="2"/>`,
      // plan view, dimensions
      ln(585, 322, 832, 322), ln(587, 314, 587, 330), ln(602, 314, 602, 330), ln(815, 314, 815, 330), ln(831, 314, 831, 330),
      tick(587, 322), tick(602, 322), tick(815, 322), tick(831, 322),
      ln(773, 292, 773, 313, 3), ln(773, 507, 773, 528, 3),
      ln(586, 371, 612, 371), ln(808, 371, 836, 371), ln(586, 364, 586, 377), ln(608, 364, 608, 377), ln(808, 364, 808, 377), ln(831, 364, 831, 377),
      tick(586, 371), tick(608, 371), tick(808, 371), tick(831, 371),
      // plan view, walls
      `<rect x="588" y="378" width="20" height="93" fill="url(#diag)"/><rect x="809" y="378" width="22" height="93" fill="url(#diag)"/>`,
      `<rect x="508" y="472" width="114" height="27" fill="url(#diag)"/><rect x="796" y="472" width="156" height="27" fill="url(#diag)"/>`,
      ln(586, 377.500, 832, 377.500, 3), ln(587.500, 377, 587.500, 471, 3), ln(608.500, 377, 608.500, 471, 2), ln(808.500, 377, 808.500, 471, 2), ln(831, 377, 831, 471, 3),
      ln(609, 392, 808, 392, 2, '#ff0'), ln(609, 399, 808, 399, 2, '#ff0'),
      ln(508, 471, 952, 471, 2), ln(508, 499, 622, 499, 2), ln(622, 498, 795, 498, 2), ln(795, 499, 952, 499, 2),
      ln(622.500, 471, 622.500, 499, 3), ln(794.500, 471, 794.500, 499, 3),
      ln(508, 456, 508, 513), ln(952, 456, 952, 513),
      `<path d="M508 486l6 1-4 3 0 2M952 484l-6 2 5 3-1 2" stroke="#fff" fill="#000"/>`,
      `<path d="M708 414v6M708 428v43M708 474v13M708 491v14" stroke="#fff"/>`,
      `<circle cx="707" cy="470" r="5" fill="#f00"/>`,
      // opening width
      ln(622, 514, 622, 542), ln(795, 514, 795, 542), ln(620, 535, 797, 535), tick(622, 535), tick(795, 535),
      // section, wall and slabs
      ln(1102, 243, 1102, 263), ln(1130, 243, 1130, 263), ln(1098, 249, 1134, 249), tick(1102, 249), tick(1130, 249),
      `<rect x="1103" y="272" width="127" height="12" fill="url(#conc)"/>`,
      ln(1102, 271, 1230, 271, 2), ln(1102, 285, 1230, 285, 2),
      ln(1130, 287, 1130, 613, 2, '#ff0'), ln(1137, 287, 1137, 613, 2, '#ff0'),
      `<rect x="1232" y="211" width="26" height="30" fill="url(#diag)"/><rect x="1232" y="243" width="26" height="56" fill="url(#conc)"/><rect x="1259" y="243" width="108" height="13" fill="url(#conc)"/>`,
      ln(1230, 211, 1230, 793, 2), ln(1259, 211, 1259, 793, 2),
      ln(1231, 242, 1367, 242, 2), ln(1259, 257, 1367, 257, 2), ln(1231, 300, 1259, 300, 2), ln(1367, 235, 1367, 262),
      levelMark(228),
      ln(1259, 300, 1308, 300), ln(1303, 300, 1303, 628), tick(1303, 300), tick(1303, 628), ln(1259, 628, 1308, 628),
      ln(1066, 268, 1066, 643),
      ln(1058, 271, 1080, 271), ln(1058, 285, 1080, 285), ln(1058, 614, 1078, 614), ln(1058, 629, 1078, 629), ln(1058, 643, 1078, 643),
      // section, sill
      ln(1152, 585, 1223, 585), ln(1152, 585, 1138, 600), ln(1123, 600, 1146, 600), ln(1124, 594, 1124, 606), ln(1145, 594, 1145, 606), tick(1124, 600), tick(1145, 600),
      `<path d="M1123 628v-14h22v14" fill="none" stroke="#fff" stroke-width="2"/>`,
      `<rect x="1103" y="629" width="156" height="15" fill="url(#conc)"/><rect x="1232" y="644" width="26" height="12" fill="url(#conc)"/><rect x="1232" y="658" width="26" height="55" fill="url(#diag)"/>`,
      `<rect x="1232" y="715" width="26" height="41" fill="url(#conc)"/><rect x="1259" y="715" width="108" height="13" fill="url(#conc)"/><rect x="1232" y="758" width="26" height="35" fill="url(#diag)"/>`,
      `<path d="M1231 644H1102v-16h157" fill="none" stroke="#fff" stroke-width="2"/>`,
      ln(1231, 657, 1259, 657, 2), ln(1231, 714, 1367, 714, 2), ln(1259, 729, 1367, 729, 2), ln(1231, 757, 1259, 757, 2), ln(1367, 707, 1367, 734),
      levelMark(701),
      ln(1223, 793, 1266, 793),
      ln(1102, 650, 1102, 692), ln(1130, 650, 1130, 692), ln(1098, 685, 1230, 685), tick(1102, 685), tick(1130, 685), tick(1230, 685),
      ln(1169, 836, 1303, 836, 2),
      // variable table
      `<rect x="529" y="678" width="401" height="115" fill="none" stroke="#fff" stroke-width="2"/>`,
      ln(665, 678, 665, 793), ln(729, 678, 729, 793), ln(865, 678, 865, 793), ln(529, 707, 930, 707), ln(529, 735, 930, 735), ln(529, 765, 930, 765)
    ].join('');
    const words = [
      num(579, 596, 313, '25'), txt(604, 610, 313, '('), num(613, 630, 312, '25'), txt(629, 635, 313, ')'),
      num(695, 729, 314, '1800'), txt(779, 793, 317, 'A', { z: 24 }),
      num(809, 826, 314, '25'), txt(833, 839, 313, '('), num(842, 859, 312, '25'), txt(858, 864, 313, ')'),
      txt(585, 638, 341, 'X2 (X5)'), txt(695, 755, 343, '窗长 CC'), txt(815, 868, 341, 'X3 (X6)'),
      txt(475, 580, 364, '左侧板厚ZCBH'), txt(852, 958, 364, '右侧板厚YCBH'),
      num(595, 602, 363, '0'), num(816, 823, 363, '0'),
      txt(710, 761, 486, '插入点'), num(695, 729, 529, '1500'), txt(779, 793, 532, 'A', { z: 24 }), txt(680, 755, 557, '洞口宽 DK'),
      txt(515, 538, 632, '注:', { c: '#00e8e8' }),
      txt(549, 994, 632, '1.变量已经在图中标明，请在相应的位置处输入属性值。', { c: '#00e8e8' }),
      txt(548, 868, 663, '2.所有参数未注明单位时均以mm为单位。', { c: '#00e8e8' }),
      txt(556, 627, 698, '变量名称', { z: 18 }), txt(677, 712, 699, '变量', { z: 18 }), txt(757, 827, 698, '变量名称', { z: 18 }), txt(880, 914, 699, '变量', { z: 18 }),
      ...rows.flatMap(([y, y2, a, b]) => [
        txt(552, 658, y, '窗距底板边长', { z: 18 }), txt(694, 711, y2, a), txt(752, 858, y, '窗距顶板边长', { z: 18 }), txt(894, 911, y2, b)
      ]),
      num(1109, 1125, 243, '25'), txt(1107, 1124, 266, 'X4'),
      num(1031, 1057, 286, '200'), txt(1024, 1097, 313, '顶板厚 H2', { z: 17 }),
      num(1023, 1058, 443, '2050'), txt(1024, 1090, 464, '窗高 CC', { z: 17 }),
      num(1310, 1344, 443, '2050'), txt(1310, 1386, 464, '洞口高 DK', { z: 17 }),
      txt(1153, 1225, 579, '底座宽 ZK', { z: 17 }), num(1131, 1138, 593, '0'), txt(1153, 1226, 623, '底座高 ZG', { z: 17 }),
      num(1052, 1059, 628, '0'), num(1038, 1064, 643, '100'), txt(1009, 1089, 665, '底板厚 H1', { z: 17 }),
      num(1109, 1125, 679, '25'), num(1167, 1192, 679, '800'), txt(1106, 1123, 702, 'X1'), txt(1153, 1211, 707, '窗宽 CK', { z: 17 }),
      txt(1207, 1251, 831, 'A-A', { z: 27 })
    ].join('');
    this.attachShadow({ mode: 'open' }).innerHTML = `<style>:host{display:block;height:100%}svg{display:block}</style>
    <svg width="898" height="681" viewBox="477 208 898 681">
      <defs>
        <pattern id="diag" width="14" height="14" patternUnits="userSpaceOnUse"><path d="M0 14L14 0" stroke="#fff"/></pattern>
        <pattern id="conc" width="38" height="15" patternUnits="userSpaceOnUse">
          <path d="M2 12l6-7 2 7zM17 5l5 6h-7zM27 12l7-5v5zM13 3h1M24 4h1M36 2h1M11 13h1M12 10l3-3M24 13l3-3M35 9l3-3" stroke="#fff" fill="none"/>
        </pattern>
      </defs>
      <g shape-rendering="crispEdges">${art}</g>${words}
    </svg>`;
  }
}

class RedMarks extends HTMLElement {
  constructor() {
    super();
    const marks = [[204.5, 560.5, 83, 30, 3, 8], [1049, 280.5, 50.5, 48, 0, 7], [1045, 441, 44.5, 32, 0, 7], [1318, 428.5, 50.5, 50, 0, 7], [1055, 626.5, 26, 37, 0, 7]];
    this.attachShadow({ mode: 'open' }).innerHTML = `<style>
      :host{position:absolute;inset:0;pointer-events:none;display:block}
      svg{display:block}
    </style><svg width="1375" height="899" shape-rendering="crispEdges">
      ${marks.map(([cx, cy, rx, ry, a, w]) => `<ellipse cx="${cx}" cy="${cy}" rx="${rx}" ry="${ry}" transform="rotate(${a} ${cx} ${cy})" fill="none" stroke="#f00" stroke-width="${w}"/>`).join('')}
    </svg>`;
  }
}

const defs = {
  'ui-icon': UiIcon, 'tool-caret': ToolCaret, 'tool-item': ToolItem, 'tool-sep': ToolSep, 'tool-grip': ToolGrip, 'tool-bar': ToolBar,
  'menu-bar': MenuBar, 'combo-box': ComboBox, 'dock-pin': DockPin, 'dock-x': DockX, 'dock-narrow': DockNarrow, 'dock-column': DockColumn,
  'dock-header': DockHeader, 'search-row': SearchRow, 'part-list': PartList, 'prop-grid': PropGrid, 'side-tool': SideTool, 'side-bar': SideBar,
  'cad-view': CadView, 'param-dialog': ParamDialog, 'cad-sheet': CadSheet, 'red-marks': RedMarks
};
Object.entries(defs).forEach(([name, cls]) => customElements.define(name, cls));
</script>
</body>
</html>
